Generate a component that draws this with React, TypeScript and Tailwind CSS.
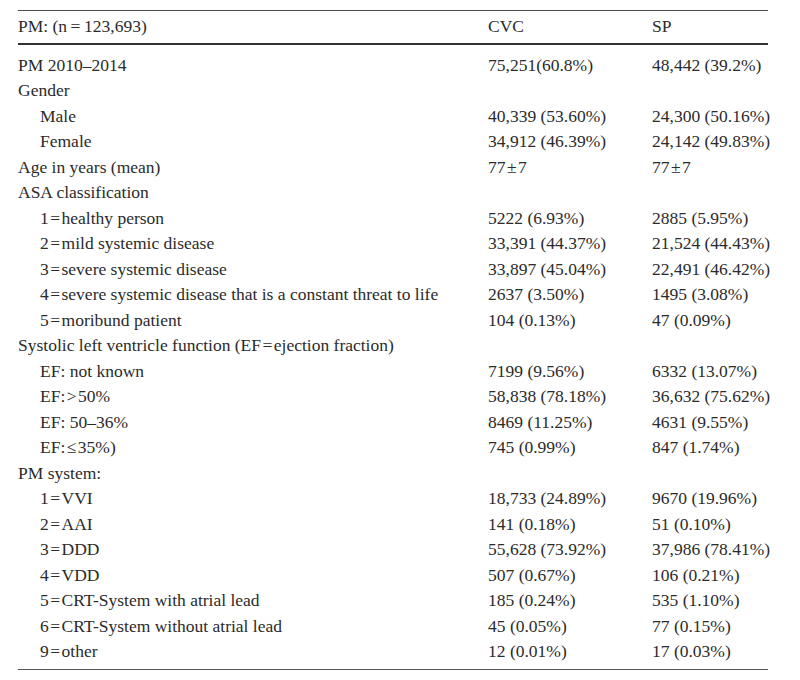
const rows: [string, string, string, boolean][] = [
  ['PM 2010–2014', '75,251(60.8%)', '48,442 (39.2%)', false],
  ['Gender', '', '', false],
  ['Male', '40,339 (53.60%)', '24,300 (50.16%)', true],
  ['Female', '34,912 (46.39%)', '24,142 (49.83%)', true],
  ['Age in years (mean)', '77\u200a±\u200a7', '77\u200a±\u200a7', false],
  ['ASA classification', '', '', false],
  ['1\u200a=\u200ahealthy person', '5222 (6.93%)', '2885 (5.95%)', true],
  ['2\u200a=\u200amild systemic disease', '33,391 (44.37%)', '21,524 (44.43%)', true],
  ['3\u200a=\u200asevere systemic disease', '33,897 (45.04%)', '22,491 (46.42%)', true],
  ['4\u200a=\u200asevere systemic disease that is a constant threat to life', '2637 (3.50%)', '1495 (3.08%)', true],
  ['5\u200a=\u200amoribund patient', '104 (0.13%)', '47 (0.09%)', true],
  ['Systolic left ventricle function (EF\u200a=\u200aejection fraction)', '', '', false],
  ['EF: not known', '7199 (9.56%)', '6332 (13.07%)', true],
  ['EF:\u200a>\u200a50%', '58,838 (78.18%)', '36,632 (75.62%)', true],
  ['EF: 50–36%', '8469 (11.25%)', '4631 (9.55%)', true],
  ['EF:\u200a≤\u200a35%)', '745 (0.99%)', '847 (1.74%)', true],
  ['PM system:', '', '', false],
  ['1\u200a=\u200aVVI', '18,733 (24.89%)', '9670 (19.96%)', true],
  ['2\u200a=\u200aAAI', '141 (0.18%)', '51 (0.10%)', true],
  ['3\u200a=\u200aDDD', '55,628 (73.92%)', '37,986 (78.41%)', true],
  ['4\u200a=\u200aVDD', '507 (0.67%)', '106 (0.21%)', true],
  ['5\u200a=\u200aCRT-System with atrial lead', '185 (0.24%)', '535 (1.10%)', true],
  ['6\u200a=\u200aCRT-System without atrial lead', '45 (0.05%)', '77 (0.15%)', true],
  ['9\u200a=\u200aother', '12 (0.01%)', '17 (0.03%)', true],
]

export default function App() {
  return (
    <div className="w-[800px] h-[680px] bg-white pt-[10px] text-[#2b2b2b] text-[17.5px] leading-[25.5px] [font-family:Liberation_Serif,serif]">
      <div className="ml-[18px] w-[750px]">
        {/* Header */}
        <div className="grid grid-cols-[470px_164px_1fr] border-t border-[#4a4a4a] pt-[3px] pb-[3px] border-b-2 border-b-[#333]">
          <div>PM: (n{'\u2009=\u2009'}123,693)</div>
          <div>CVC</div>
          <div>SP</div>
        </div>

        {/* Body */}
        <div className="pt-[8px] pb-[4px] border-b-[1.5px] border-[#555]">
          {rows.map(([label, cvc, sp, indent], i) => (
            <div key={i} className="grid grid-cols-[470px_164px_1fr]">
              <div className={indent ? 'pl-[22px] whitespace-nowrap' : 'whitespace-nowrap'}>{label}</div>
              <div className="whitespace-nowrap">{cvc}</div>
              <div className="whitespace-nowrap">{sp}</div>
            </div>
          ))}
        </div>
      </div>
    </div>
  )
}
